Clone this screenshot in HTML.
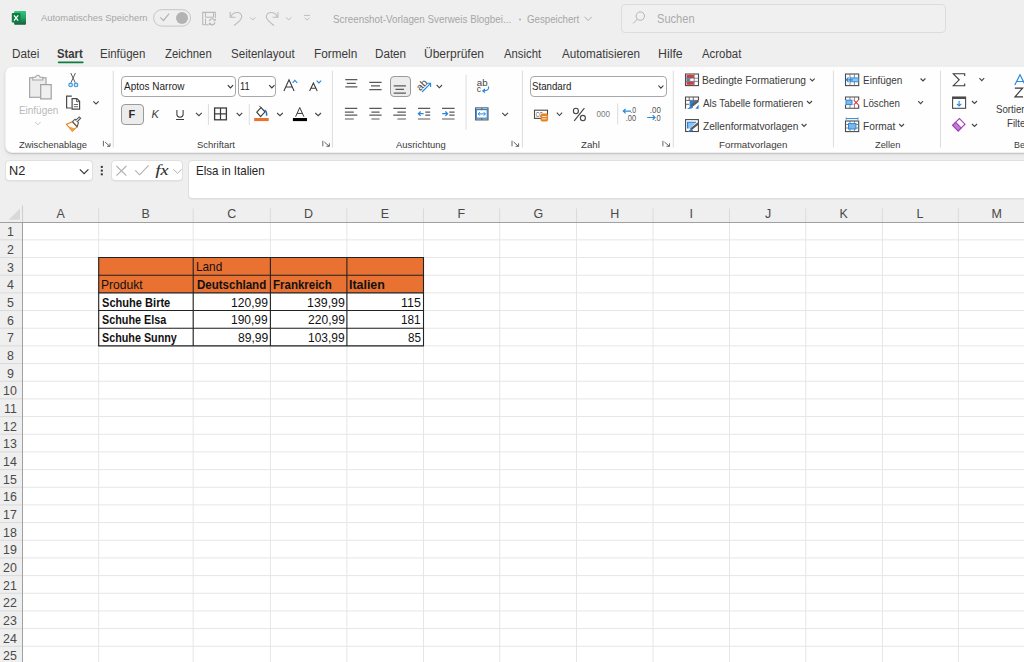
<!DOCTYPE html>
<html><head><meta charset="utf-8">
<style>
*{margin:0;padding:0;box-sizing:border-box}
html,body{width:1024px;height:662px;overflow:hidden;background:#efefef;font-family:"Liberation Sans",sans-serif;position:relative}
.a{position:absolute}
.t{position:absolute;white-space:nowrap;transform-origin:0 0}
.ov{position:absolute;left:0;top:0;overflow:visible}
</style></head><body>
<svg class="ov" width="1024" height="662" viewBox="0 0 1024 662"><rect x="0" y="199" width="1024" height="23.2" fill="#efefef"/><rect x="0" y="222.2" width="22.5" height="450" fill="#efefef"/><rect x="22.5" y="222.2" width="1002" height="450" fill="#ffffff"/><line x1="98.7" y1="222.2" x2="98.7" y2="662" stroke="#e6e6e6" stroke-width="1"/><line x1="98.7" y1="208.5" x2="98.7" y2="222.2" stroke="#dadada" stroke-width="1"/><line x1="193.2" y1="222.2" x2="193.2" y2="662" stroke="#e6e6e6" stroke-width="1"/><line x1="193.2" y1="208.5" x2="193.2" y2="222.2" stroke="#dadada" stroke-width="1"/><line x1="270.4" y1="222.2" x2="270.4" y2="662" stroke="#e6e6e6" stroke-width="1"/><line x1="270.4" y1="208.5" x2="270.4" y2="222.2" stroke="#dadada" stroke-width="1"/><line x1="346.9" y1="222.2" x2="346.9" y2="662" stroke="#e6e6e6" stroke-width="1"/><line x1="346.9" y1="208.5" x2="346.9" y2="222.2" stroke="#dadada" stroke-width="1"/><line x1="423.5" y1="222.2" x2="423.5" y2="662" stroke="#e6e6e6" stroke-width="1"/><line x1="423.5" y1="208.5" x2="423.5" y2="222.2" stroke="#dadada" stroke-width="1"/><line x1="499.75" y1="222.2" x2="499.75" y2="662" stroke="#e6e6e6" stroke-width="1"/><line x1="499.75" y1="208.5" x2="499.75" y2="222.2" stroke="#dadada" stroke-width="1"/><line x1="576.5" y1="222.2" x2="576.5" y2="662" stroke="#e6e6e6" stroke-width="1"/><line x1="576.5" y1="208.5" x2="576.5" y2="222.2" stroke="#dadada" stroke-width="1"/><line x1="653" y1="222.2" x2="653" y2="662" stroke="#e6e6e6" stroke-width="1"/><line x1="653" y1="208.5" x2="653" y2="222.2" stroke="#dadada" stroke-width="1"/><line x1="729.5" y1="222.2" x2="729.5" y2="662" stroke="#e6e6e6" stroke-width="1"/><line x1="729.5" y1="208.5" x2="729.5" y2="222.2" stroke="#dadada" stroke-width="1"/><line x1="805.75" y1="222.2" x2="805.75" y2="662" stroke="#e6e6e6" stroke-width="1"/><line x1="805.75" y1="208.5" x2="805.75" y2="222.2" stroke="#dadada" stroke-width="1"/><line x1="882.4" y1="222.2" x2="882.4" y2="662" stroke="#e6e6e6" stroke-width="1"/><line x1="882.4" y1="208.5" x2="882.4" y2="222.2" stroke="#dadada" stroke-width="1"/><line x1="958.4" y1="222.2" x2="958.4" y2="662" stroke="#e6e6e6" stroke-width="1"/><line x1="958.4" y1="208.5" x2="958.4" y2="222.2" stroke="#dadada" stroke-width="1"/><line x1="1035" y1="222.2" x2="1035" y2="662" stroke="#e6e6e6" stroke-width="1"/><line x1="1035" y1="208.5" x2="1035" y2="222.2" stroke="#dadada" stroke-width="1"/><line x1="22.5" y1="239.87" x2="1024" y2="239.87" stroke="#e6e6e6" stroke-width="1"/><line x1="0" y1="239.87" x2="22.5" y2="239.87" stroke="#dadada" stroke-width="1"/><line x1="22.5" y1="257.54" x2="1024" y2="257.54" stroke="#e6e6e6" stroke-width="1"/><line x1="0" y1="257.54" x2="22.5" y2="257.54" stroke="#dadada" stroke-width="1"/><line x1="22.5" y1="275.21" x2="1024" y2="275.21" stroke="#e6e6e6" stroke-width="1"/><line x1="0" y1="275.21" x2="22.5" y2="275.21" stroke="#dadada" stroke-width="1"/><line x1="22.5" y1="292.88" x2="1024" y2="292.88" stroke="#e6e6e6" stroke-width="1"/><line x1="0" y1="292.88" x2="22.5" y2="292.88" stroke="#dadada" stroke-width="1"/><line x1="22.5" y1="310.55" x2="1024" y2="310.55" stroke="#e6e6e6" stroke-width="1"/><line x1="0" y1="310.55" x2="22.5" y2="310.55" stroke="#dadada" stroke-width="1"/><line x1="22.5" y1="328.22" x2="1024" y2="328.22" stroke="#e6e6e6" stroke-width="1"/><line x1="0" y1="328.22" x2="22.5" y2="328.22" stroke="#dadada" stroke-width="1"/><line x1="22.5" y1="345.89" x2="1024" y2="345.89" stroke="#e6e6e6" stroke-width="1"/><line x1="0" y1="345.89" x2="22.5" y2="345.89" stroke="#dadada" stroke-width="1"/><line x1="22.5" y1="363.56" x2="1024" y2="363.56" stroke="#e6e6e6" stroke-width="1"/><line x1="0" y1="363.56" x2="22.5" y2="363.56" stroke="#dadada" stroke-width="1"/><line x1="22.5" y1="381.23" x2="1024" y2="381.23" stroke="#e6e6e6" stroke-width="1"/><line x1="0" y1="381.23" x2="22.5" y2="381.23" stroke="#dadada" stroke-width="1"/><line x1="22.5" y1="398.9" x2="1024" y2="398.9" stroke="#e6e6e6" stroke-width="1"/><line x1="0" y1="398.9" x2="22.5" y2="398.9" stroke="#dadada" stroke-width="1"/><line x1="22.5" y1="416.57" x2="1024" y2="416.57" stroke="#e6e6e6" stroke-width="1"/><line x1="0" y1="416.57" x2="22.5" y2="416.57" stroke="#dadada" stroke-width="1"/><line x1="22.5" y1="434.24" x2="1024" y2="434.24" stroke="#e6e6e6" stroke-width="1"/><line x1="0" y1="434.24" x2="22.5" y2="434.24" stroke="#dadada" stroke-width="1"/><line x1="22.5" y1="451.91" x2="1024" y2="451.91" stroke="#e6e6e6" stroke-width="1"/><line x1="0" y1="451.91" x2="22.5" y2="451.91" stroke="#dadada" stroke-width="1"/><line x1="22.5" y1="469.58" x2="1024" y2="469.58" stroke="#e6e6e6" stroke-width="1"/><line x1="0" y1="469.58" x2="22.5" y2="469.58" stroke="#dadada" stroke-width="1"/><line x1="22.5" y1="487.25" x2="1024" y2="487.25" stroke="#e6e6e6" stroke-width="1"/><line x1="0" y1="487.25" x2="22.5" y2="487.25" stroke="#dadada" stroke-width="1"/><line x1="22.5" y1="504.92" x2="1024" y2="504.92" stroke="#e6e6e6" stroke-width="1"/><line x1="0" y1="504.92" x2="22.5" y2="504.92" stroke="#dadada" stroke-width="1"/><line x1="22.5" y1="522.59" x2="1024" y2="522.59" stroke="#e6e6e6" stroke-width="1"/><line x1="0" y1="522.59" x2="22.5" y2="522.59" stroke="#dadada" stroke-width="1"/><line x1="22.5" y1="540.26" x2="1024" y2="540.26" stroke="#e6e6e6" stroke-width="1"/><line x1="0" y1="540.26" x2="22.5" y2="540.26" stroke="#dadada" stroke-width="1"/><line x1="22.5" y1="557.93" x2="1024" y2="557.93" stroke="#e6e6e6" stroke-width="1"/><line x1="0" y1="557.93" x2="22.5" y2="557.93" stroke="#dadada" stroke-width="1"/><line x1="22.5" y1="575.6" x2="1024" y2="575.6" stroke="#e6e6e6" stroke-width="1"/><line x1="0" y1="575.6" x2="22.5" y2="575.6" stroke="#dadada" stroke-width="1"/><line x1="22.5" y1="593.27" x2="1024" y2="593.27" stroke="#e6e6e6" stroke-width="1"/><line x1="0" y1="593.27" x2="22.5" y2="593.27" stroke="#dadada" stroke-width="1"/><line x1="22.5" y1="610.94" x2="1024" y2="610.94" stroke="#e6e6e6" stroke-width="1"/><line x1="0" y1="610.94" x2="22.5" y2="610.94" stroke="#dadada" stroke-width="1"/><line x1="22.5" y1="628.61" x2="1024" y2="628.61" stroke="#e6e6e6" stroke-width="1"/><line x1="0" y1="628.61" x2="22.5" y2="628.61" stroke="#dadada" stroke-width="1"/><line x1="22.5" y1="646.28" x2="1024" y2="646.28" stroke="#e6e6e6" stroke-width="1"/><line x1="0" y1="646.28" x2="22.5" y2="646.28" stroke="#dadada" stroke-width="1"/><line x1="22.5" y1="663.95" x2="1024" y2="663.95" stroke="#e6e6e6" stroke-width="1"/><line x1="0" y1="663.95" x2="22.5" y2="663.95" stroke="#dadada" stroke-width="1"/><line x1="0" y1="222.5" x2="1024" y2="222.5" stroke="#a0a0a0" stroke-width="1"/><line x1="22.5" y1="205.4" x2="22.5" y2="222.2" stroke="#cfcfcf" stroke-width="1.1"/><line x1="22.5" y1="222.2" x2="22.5" y2="662" stroke="#a0a0a0" stroke-width="1"/><polygon points="20,208.6 20,219.7 8.6,219.7" fill="#d9d9d9"/><rect x="98.7" y="257.54" width="324.80" height="35.34" fill="#e97132"/><line x1="98.7" y1="257.54" x2="98.7" y2="345.89" stroke="#222" stroke-width="1.1"/><line x1="193.2" y1="257.54" x2="193.2" y2="345.89" stroke="#222" stroke-width="1.1"/><line x1="270.4" y1="257.54" x2="270.4" y2="345.89" stroke="#222" stroke-width="1.1"/><line x1="346.9" y1="257.54" x2="346.9" y2="345.89" stroke="#222" stroke-width="1.1"/><line x1="423.5" y1="257.54" x2="423.5" y2="345.89" stroke="#222" stroke-width="1.1"/><line x1="98.2" y1="257.54" x2="424.0" y2="257.54" stroke="#222" stroke-width="1.1"/><line x1="98.2" y1="275.21" x2="424.0" y2="275.21" stroke="#222" stroke-width="1.1"/><line x1="98.2" y1="292.88" x2="424.0" y2="292.88" stroke="#222" stroke-width="1.1"/><line x1="98.2" y1="310.55" x2="424.0" y2="310.55" stroke="#222" stroke-width="1.1"/><line x1="98.2" y1="328.22" x2="424.0" y2="328.22" stroke="#222" stroke-width="1.1"/><line x1="98.2" y1="345.89" x2="424.0" y2="345.89" stroke="#222" stroke-width="1.1"/></svg>
<div class="a" style="left:620.7px;top:3.7px;width:324.9px;height:29.4px;background:#f0f0f0;border:1.2px solid #dcdcdc;border-radius:4px"></div>
<div class="a" style="left:5.3px;top:66px;width:1040px;height:86.8px;background:#fefefe;border:1px solid rgba(0,0,0,.055);border-radius:7px;box-shadow:0 1px 1.5px rgba(0,0,0,.18),0 3px 6px rgba(0,0,0,.04)"></div>
<div class="a" style="left:121.4px;top:76px;width:114.3px;height:20.85px;background:#fff;border:1px solid #a8a8a8;border-radius:4px"></div>
<div class="a" style="left:237.9px;top:76px;width:38.6px;height:20.85px;background:#fff;border:1px solid #a8a8a8;border-radius:4px"></div>
<div class="a" style="left:530.1px;top:76.2px;width:136.7px;height:20.9px;background:#fff;border:1px solid #a8a8a8;border-radius:4px"></div>
<div class="a" style="left:121.2px;top:103.7px;width:22.9px;height:21.2px;background:#ececec;border:1px solid #9a9a9a;border-radius:4px"></div>
<div class="a" style="left:389.6px;top:76.2px;width:21.8px;height:20.5px;background:#ececec;border:1px solid #9a9a9a;border-radius:4px"></div>
<div class="a" style="left:4.9px;top:159.9px;width:87.9px;height:21.5px;background:#fff;border:1px solid #e0e0e0;border-radius:4px;box-shadow:0 0.5px 0.5px rgba(0,0,0,.08)"></div>
<div class="a" style="left:110.8px;top:160.1px;width:72.3px;height:21.3px;background:#fff;border:1px solid #e0e0e0;border-radius:4px;box-shadow:0 0.5px 0.5px rgba(0,0,0,.08)"></div>
<div class="a" style="left:187.5px;top:159.9px;width:900px;height:39.2px;background:#fff;border:1px solid #e0e0e0;border-radius:4px;box-shadow:0 0.5px 0.5px rgba(0,0,0,.08)"></div>
<svg class="ov" width="1024" height="662" viewBox="0 0 1024 662">
<defs>
<linearGradient id="xg" x1="0" y1="0" x2="0" y2="1"><stop offset="0" stop-color="#33c481"/><stop offset="0.5" stop-color="#21a366"/><stop offset="1" stop-color="#185c37"/></linearGradient>
</defs>
<!-- excel logo -->
<rect x="14.1" y="10.9" width="11.9" height="13.9" rx="1" fill="url(#xg)"/>
<rect x="11.8" y="13.1" width="8.7" height="9.5" rx="0.8" fill="#107c41"/>
<path d="M14 15.3 L18.2 20.6 M18.2 15.3 L14 20.6" stroke="#fff" stroke-width="1.3"/>
<!-- toggle -->
<rect x="153.6" y="9.7" width="37" height="16.4" rx="8.2" fill="none" stroke="#c6c6c6" stroke-width="1"/>
<path d="M160.3 17.3 L163.5 20.5 L169.1 13.7" fill="none" stroke="#b4b4b4" stroke-width="1.2"/>
<circle cx="182" cy="18" r="6" fill="#b3b3b3"/>
<!-- save -->
<path d="M208.4 24.7 H203.4 Q202.7 24.7 202.7 24 V12.4 H215.3 V17.8" fill="none" stroke="#b9b9b9" stroke-width="1.1"/>
<path d="M205.5 24.5 V18.6 M205.5 12.4 V17.2 H213.5 V12.4" fill="none" stroke="#b9b9b9" stroke-width="1"/>
<path d="M209.3 21.2 A3 3 0 0 1 214.9 20.3 M215 22.4 A3 3 0 0 1 209.4 23.3" fill="none" stroke="#b4b4b4" stroke-width="1.1"/>
<path d="M215.3 18.7 V20.6 H213.4 M209.2 25.2 V23.3 H211.1" fill="none" stroke="#b4b4b4" stroke-width="0.9"/>
<!-- undo redo -->
<path d="M230.2 12 V17.3 H235.5" fill="none" stroke="#bcbcbc" stroke-width="1.1"/>
<path d="M230.8 17 C233 11.2 241.8 10.8 241.8 17 C241.8 19.6 238 22.5 234 25.6" fill="none" stroke="#bcbcbc" stroke-width="1.1"/>
<path d="M250 17.3 L252.7 20 L255.4 17.3" fill="none" stroke="#bcbcbc" stroke-width="1"/>
<path d="M277.9 12 V17.3 H272.6" fill="none" stroke="#bcbcbc" stroke-width="1.1"/>
<path d="M277.3 17 C275.1 11.2 266.3 10.8 266.3 17 C266.3 19.6 270.1 22.5 274.1 25.6" fill="none" stroke="#bcbcbc" stroke-width="1.1"/>
<path d="M286 17.3 L288.7 20 L291.4 17.3" fill="none" stroke="#bcbcbc" stroke-width="1"/>
<path d="M304.1 15.4 H310 M304.6 17.7 L307.05 20.2 L309.5 17.7" fill="none" stroke="#bcbcbc" stroke-width="1"/>
<!-- title chevron + bullet -->
<circle cx="520" cy="19.5" r="1" fill="#b0b0b0"/>
<path d="M584.5 16.8 L588.15 20.5 L591.8 16.8" fill="none" stroke="#b0b0b0" stroke-width="1"/>
<!-- search icon -->
<circle cx="640.3" cy="16.1" r="4.2" fill="none" stroke="#b4b4b4" stroke-width="1"/>
<path d="M637.3 19.1 L633.3 23.4" stroke="#b4b4b4" stroke-width="1"/>
<!-- tab underline -->
<rect x="57.8" y="61.4" width="25.8" height="1.8" rx="0.9" fill="#0f7b3e"/>
<!-- separators -->
<g stroke="#dcdcdc" stroke-width="1">
<line x1="113.2" y1="70.7" x2="113.2" y2="147.5"/>
<line x1="332.4" y1="70.7" x2="332.4" y2="147.5"/>
<line x1="522.4" y1="70.7" x2="522.4" y2="147.5"/>
<line x1="673.3" y1="70.7" x2="673.3" y2="147.5"/>
<line x1="833.4" y1="70.7" x2="833.4" y2="147.5"/>
<line x1="940.5" y1="70.7" x2="940.5" y2="147.5"/>
<line x1="208.4" y1="104" x2="208.4" y2="125"/>
<line x1="249.3" y1="104" x2="249.3" y2="125"/>
<line x1="466.1" y1="74.8" x2="466.1" y2="129.5"/>
<line x1="617.7" y1="103.5" x2="617.7" y2="124.6"/>
</g>
<!-- ===== CLIPBOARD ===== -->
<rect x="29.6" y="77.8" width="16.4" height="19.5" fill="#ececec" stroke="#a6a6a6" stroke-width="1.2"/>
<path d="M32.8 80 V77.3 H35.6 C35.8 74.5 39.8 74.5 40 77.3 H42.8 V80 Z" fill="#f3f3f3" stroke="#a6a6a6" stroke-width="1.1"/>
<rect x="40.7" y="84.6" width="10.5" height="14.3" fill="#f0f0f0" stroke="#a0a0a0" stroke-width="1.2"/>
<path d="M35.2 122 L37.9 124.8 L40.6 122" fill="none" stroke="#c0c0c0" stroke-width="0.9"/>
<!-- scissors -->
<path d="M70.8 73 L75.2 82.6 M75.4 73 L71 82.6" stroke="#4a4a4a" stroke-width="0.9"/>
<circle cx="70.6" cy="84.9" r="1.8" fill="#cfe6f8" stroke="#3a96dd" stroke-width="1.1"/>
<circle cx="76" cy="84.9" r="1.8" fill="#cfe6f8" stroke="#3a96dd" stroke-width="1.1"/>
<!-- copy -->
<path d="M71.6 108 H66.6 V96.2 H71.8" fill="none" stroke="#4a4a4a" stroke-width="1.2"/>
<path d="M72.1 98.7 H77 L79.6 101.3 V109.2 H72.1 Z" fill="#fff" stroke="#4a4a4a" stroke-width="1.2"/>
<path d="M76.6 98.7 V101.7 H79.6" fill="none" stroke="#4a4a4a" stroke-width="0.9"/>
<path d="M73.8 104.5 H78 M73.8 106.7 H78" stroke="#4a4a4a" stroke-width="0.8"/>
<path d="M93.3 101.3 L96 104 L98.7 101.3" fill="none" stroke="#444" stroke-width="1.1"/>
<!-- format painter -->
<path d="M66.4 124.3 L72.2 121.9 L77 126.8 L72.4 131.2 Z" fill="#fff" stroke="#e8821e" stroke-width="1.1"/>
<path d="M68.8 126.5 L75.3 128.4 L72.4 131.2 Z" fill="#f0a040"/>
<path d="M72.5 121.6 L75 119.2 L78.4 122.6 L77.2 126.6 Z" fill="#fff" stroke="#555" stroke-width="1.1"/>
<path d="M75.6 120.3 L79.3 116.9 L80.6 118.2 L77.2 121.9" fill="#fff" stroke="#555" stroke-width="1.1"/>
<!-- launchers -->
<g fill="none" stroke="#555" stroke-width="0.9">
<path d="M103.4 140.8 V146.3 M105 142 L109.8 146.3 M107 146.3 H110 V143.3"/>
<path d="M322.8 140.8 V146.3 M324.4 142 L329.2 146.3 M326.4 146.3 H329.4 V143.3"/>
<path d="M512 140.8 V146.3 M513.6 142 L518.4 146.3 M515.6 146.3 H518.6 V143.3"/>
<path d="M662.9 140.8 V146.3 M664.5 142 L669.3 146.3 M666.5 146.3 H669.5 V143.3"/>
</g>
<!-- ===== FONT ===== -->
<path d="M227.8 85.2 L230.45 87.9 L233.1 85.2" fill="none" stroke="#333" stroke-width="1.1"/>
<path d="M269.2 85.2 L271.85 87.9 L274.5 85.2" fill="none" stroke="#333" stroke-width="1.1"/>
<path d="M658.4 85.5 L660.9 88.2 L663.4 85.5" fill="none" stroke="#333" stroke-width="1.1"/>
<!-- grow/shrink A -->
<path d="M283.9 91 L289 79.8 L294.1 91 M285.8 87 H292.2" fill="none" stroke="#3a3a3a" stroke-width="1.1"/>
<path d="M292.6 82.8 L294.9 80.4 L297.2 82.8" fill="none" stroke="#2b88d8" stroke-width="1.1"/>
<path d="M309.6 91 L313.4 83 L317.2 91 M311 88.2 H315.8" fill="none" stroke="#3a3a3a" stroke-width="1.1"/>
<path d="M316.6 80.6 L318.9 83 L321.2 80.6" fill="none" stroke="#2b88d8" stroke-width="1.1"/>
<!-- B I U -->
<text x="128.6" y="117.6" font-family="Liberation Sans" font-weight="bold" font-size="11" fill="#2a2a2a">F</text>
<text x="151.6" y="117.6" font-family="Liberation Sans" font-style="italic" font-size="11" fill="#3a3a3a">K</text>
<path d="M176.9 109.9 V114.6 C176.9 118 183.1 118 183.1 114.6 V109.9 M176.1 119.5 H184" fill="none" stroke="#3a3a3a" stroke-width="1.05"/>
<path d="M196 112.8 L198.9 115.7 L201.8 112.8" fill="none" stroke="#444" stroke-width="1.1"/>
<!-- borders -->
<rect x="214.6" y="108" width="11.8" height="11.8" fill="none" stroke="#3c3c3c" stroke-width="1.3"/>
<path d="M220.5 108 V119.8 M214.6 113.9 H226.4" stroke="#3c3c3c" stroke-width="1.2"/>
<path d="M236.7 112.8 L239.45 115.7 L242.2 112.8" fill="none" stroke="#444" stroke-width="1.1"/>
<!-- fill color -->
<path d="M256.8 112.2 L261 107.6 L265 111.8 L260.6 116.6 Z" fill="#fff" stroke="#3c3c3c" stroke-width="1.1"/>
<path d="M261 107.6 L259.3 105.8" stroke="#3c3c3c" stroke-width="1"/>
<path d="M264.6 110.2 C266.6 111 266.8 113 266.6 115.8" fill="none" stroke="#1f6fc5" stroke-width="1.5"/>
<rect x="254.2" y="118" width="14.5" height="3.1" fill="#e97132"/>
<path d="M277.1 113 L279.95 115.7 L282.8 113" fill="none" stroke="#444" stroke-width="1.1"/>
<!-- font color -->
<path d="M295.6 116.7 L299.75 107.5 L303.9 116.7 M297.2 113.4 H302.3" fill="none" stroke="#3a3a3a" stroke-width="1"/>
<rect x="292.9" y="118" width="14.1" height="3.1" fill="#000"/>
<path d="M315.3 113 L318.15 115.7 L321 113" fill="none" stroke="#444" stroke-width="1.1"/>
<!-- ===== ALIGNMENT ===== -->
<g stroke="#5a5a5a" stroke-width="1.2">
<path d="M345.3 79.6 H357.3 M346.8 83.4 H355.8 M345.3 86.9 H357.3"/>
<path d="M369.3 82.3 H381.6 M371 85.8 H380 M369.3 89.6 H381.6"/>
<path d="M393.7 85.8 H405.9 M395.5 89.4 H404 M393.7 93.1 H405.9"/>
<path d="M344.9 108.4 H357.3 M344.9 112.1 H353.8 M344.9 115.2 H357.3 M344.9 119 H353.8"/>
<path d="M369.3 108.4 H381.6 M371.4 112.1 H379.6 M369.3 115.2 H381.6 M371.4 119 H379.6"/>
<path d="M393.3 108.4 H405.9 M397.4 112.1 H405.9 M393.3 115.2 H405.9 M397.4 119 H405.9"/>
<path d="M418 108.4 H430.2 M425.3 112.1 H430.2 M425.3 115.2 H430.2 M418 119 H430.2"/>
<path d="M442 108.4 H454.6 M449.3 112.1 H454.6 M449.3 115.2 H454.6 M442 119 H454.6"/>
</g>
<path d="M418.4 113.7 H423.6 M420.6 111.5 L418.4 113.7 L420.6 115.9" fill="none" stroke="#2b88d8" stroke-width="1.3"/>
<path d="M442.2 113.7 H447.6 M445.4 111.5 L447.6 113.7 L445.4 115.9" fill="none" stroke="#2b88d8" stroke-width="1.3"/>
<!-- orientation -->
<text x="0" y="0" transform="translate(420.2,91.2) rotate(-45)" font-family="Liberation Sans" font-size="10" fill="#444">ab</text>
<path d="M422 92 L430.6 83.3 M426.8 83.3 H430.6 V87.1" fill="none" stroke="#2b88d8" stroke-width="1.1"/>
<path d="M436.7 85 L439.35 87.8 L442 85" fill="none" stroke="#444" stroke-width="1.1"/>
<!-- wrap -->
<text x="476.8" y="85.8" font-family="Liberation Sans" font-size="8.6" fill="#444" textLength="10.8" lengthAdjust="spacingAndGlyphs">ab</text>
<text x="476.8" y="92.4" font-family="Liberation Sans" font-size="8.6" fill="#444">c</text>
<path d="M488.4 86.5 C489.4 89 487.6 91 483.2 90.9 M485 89 L482.8 90.9 L485 92.6" fill="none" stroke="#2b88d8" stroke-width="1.2"/>
<!-- merge -->
<rect x="475.6" y="107.9" width="12.4" height="12" fill="#fff" stroke="#555" stroke-width="1.1"/>
<rect x="476.3" y="109.6" width="11" height="8.6" fill="#fff" stroke="#2b88d8" stroke-width="1.2"/>
<path d="M481.8 107.9 V109.6 M481.8 118.2 V119.9" stroke="#555" stroke-width="0.9"/>
<path d="M478.2 113.9 H485.4 M479.8 112.2 L478.2 113.9 L479.8 115.6 M483.8 112.2 L485.4 113.9 L483.8 115.6" fill="none" stroke="#2b88d8" stroke-width="1"/>
<path d="M502.2 112.9 L505.1 115.7 L508 112.9" fill="none" stroke="#444" stroke-width="1.1"/>
<!-- ===== NUMBER ===== -->
<rect x="534.5" y="110.2" width="13" height="8.2" fill="#fff" stroke="#4a4a4a" stroke-width="1.1"/>
<text x="535.8" y="117.2" font-family="Liberation Sans" font-size="6.5" fill="#4a4a4a" textLength="7" lengthAdjust="spacingAndGlyphs">CC</text>
<rect x="540.6" y="113.6" width="7.4" height="7.8" rx="1.6" fill="#e8821e"/>
<path d="M542 116.5 H546.6 M542 118.8 H546.6" stroke="#fff" stroke-width="0.8"/>
<path d="M556.8 112.6 L559.45 115.5 L562.1 112.6" fill="none" stroke="#444" stroke-width="1.1"/>
<path d="M574.2 120.8 L584.4 108.2" stroke="#444" stroke-width="1.1"/><ellipse cx="575.9" cy="111" rx="2.5" ry="2.7" fill="none" stroke="#444" stroke-width="1.1"/><ellipse cx="582.9" cy="118.1" rx="2.5" ry="2.7" fill="none" stroke="#444" stroke-width="1.1"/>
<text x="596.6" y="117.2" font-family="Liberation Sans" font-size="9.4" fill="#7a7a7a" textLength="13.5" lengthAdjust="spacingAndGlyphs">000</text>
<text x="630.4" y="113" font-family="Liberation Sans" font-size="8.6" fill="#555" textLength="5.8" lengthAdjust="spacingAndGlyphs">.0</text>
<text x="625.8" y="120.6" font-family="Liberation Sans" font-size="8.6" fill="#555" textLength="10.4" lengthAdjust="spacingAndGlyphs">.00</text>
<path d="M623.3 111.1 H631 M625.6 108.8 L623.3 111.1 L625.6 113.4" fill="none" stroke="#2b88d8" stroke-width="1.2"/>
<text x="649.8" y="113" font-family="Liberation Sans" font-size="8.6" fill="#555" textLength="11" lengthAdjust="spacingAndGlyphs">.00</text>
<text x="654.4" y="120.6" font-family="Liberation Sans" font-size="8.6" fill="#555" textLength="6.3" lengthAdjust="spacingAndGlyphs">.0</text>
<path d="M647.2 117.5 H655 M652.7 115.2 L655 117.5 L652.7 119.8" fill="none" stroke="#2b88d8" stroke-width="1.2"/>
<!-- ===== STYLES ===== -->
<!-- conditional formatting -->
<rect x="685.5" y="74" width="13" height="11.6" fill="#fff" stroke="#4a4a4a" stroke-width="1.1"/>
<rect x="686.5" y="75" width="7.4" height="3" fill="#e5343a"/>
<rect x="686.5" y="81.6" width="7.4" height="3.2" fill="#e5343a"/>
<rect x="686.5" y="78.4" width="3" height="2.8" fill="#2b88d8"/>
<path d="M685.5 78.2 H698.5 M685.5 81.4 H698.5 M689.8 74 V85.6 M694.2 74 V85.6" stroke="#6a6a6a" stroke-width="0.8"/>
<path d="M809.9 78.6 L812.3 81 L814.7 78.6" fill="none" stroke="#444" stroke-width="1.1"/>
<!-- format as table -->
<path d="M685.5 108.7 V97 H698.5 V100.4" fill="none" stroke="#4a4a4a" stroke-width="1.1"/>
<path d="M685.5 100.4 H698.5 M685.5 104.3 H689.2 M689.2 97 V100.4 M693.3 97 V100.4" stroke="#5a5a5a" stroke-width="0.9"/>
<path d="M689.6 100.9 H697 L690.8 106.6 H689.6 Z" fill="#2b7cd3"/>
<path d="M695.4 108.7 L698.6 104.8 V108.7 Z" fill="#2b7cd3"/>
<path d="M691.2 106.4 L698.3 100.9" stroke="#5a5a5a" stroke-width="2.3"/>
<path d="M687 108.9 C689 108.3 690 106.3 691.5 105.8 L693.2 107.3 C692 108.7 689.5 109.3 687 108.9 Z" fill="#2b7cd3"/>
<path d="M807 101 L809.5 103.5 L812 101" fill="none" stroke="#444" stroke-width="1.1"/>
<!-- cell styles -->
<rect x="685.6" y="119.6" width="12.8" height="11.9" fill="#fff" stroke="#4a4a4a" stroke-width="1.1"/>
<path d="M687.6 128.6 V122.3 H696.4 L689.8 128.6 Z" fill="#8cc4f5"/>
<path d="M687.6 128.6 V122.3 H696" fill="none" stroke="#2b7cd3" stroke-width="1.1"/>
<path d="M690.8 129.3 L698.3 123.4" stroke="#5a5a5a" stroke-width="2.3"/>
<path d="M687 131.8 C689 131.1 690 129.2 691.4 128.7 L693.1 130.2 C692 131.6 689.5 132.2 687 131.8 Z" fill="#2b7cd3"/>
<path d="M801.7 124 L804.1 126.4 L806.5 124" fill="none" stroke="#444" stroke-width="1.1"/>
<!-- ===== CELLS ===== -->
<!-- insert -->
<rect x="845.5" y="74" width="13.2" height="11.6" fill="#fff" stroke="#4a4a4a" stroke-width="1.1"/>
<path d="M850 74 V85.6 M854.4 74 V85.6" stroke="#6a6a6a" stroke-width="0.8"/>
<rect x="850.4" y="77.9" width="8" height="3.9" fill="#8cc4f5" stroke="#2b88d8" stroke-width="0.9"/>
<path d="M846.3 79.8 H853 M848.6 77.5 L846.3 79.8 L848.6 82.1" fill="none" stroke="#2b88d8" stroke-width="1.2"/>
<path d="M920.6 78.5 L923 81 L925.4 78.5" fill="none" stroke="#444" stroke-width="1.1"/>
<!-- delete -->
<path d="M845.5 100 V97 H858.7 V100 M845.5 104.8 V108.3 H858.7 V104.8" fill="none" stroke="#4a4a4a" stroke-width="1.1"/>
<path d="M850 97 V100 M854.4 97 V100 M850 104.8 V108.3 M854.4 104.8 V108.3" stroke="#6a6a6a" stroke-width="0.8"/>
<rect x="846" y="100.2" width="6" height="4.4" fill="#7ab8ee" stroke="#2b88d8" stroke-width="1"/>
<path d="M853.8 100.2 L858.4 104.8 M858.4 100.2 L853.8 104.8" stroke="#e5343a" stroke-width="1.1"/>
<path d="M918.2 101.2 L920.6 103.6 L923 101.2" fill="none" stroke="#444" stroke-width="1.1"/>
<!-- format -->
<rect x="845.5" y="121" width="13.2" height="10.6" fill="#fff" stroke="#4a4a4a" stroke-width="1.1"/>
<path d="M850 121 V131.6 M854.4 121 V131.6 M845.5 124.5 H858.7 M845.5 128 H858.7" stroke="#6a6a6a" stroke-width="0.8"/>
<rect x="848.5" y="123.6" width="7.4" height="5.4" fill="#7ab8ee" stroke="#2b88d8" stroke-width="1"/>
<path d="M846.2 118.6 H858" stroke="#2b88d8" stroke-width="1"/>
<path d="M846.2 117.4 V119.8 M858 117.4 V119.8" stroke="#2b88d8" stroke-width="0.8"/>
<path d="M899.2 124 L901.6 126.4 L904 124" fill="none" stroke="#444" stroke-width="1.1"/>
<!-- ===== EDITING ===== -->
<path d="M964.7 76 V73.8 H953.3 L959.2 79.8 L953.3 85.7 H964.7 V83.5" fill="none" stroke="#3a3a3a" stroke-width="1.1"/>
<path d="M979.4 78.2 L981.8 80.7 L984.2 78.2" fill="none" stroke="#444" stroke-width="1.1"/>
<rect x="952.6" y="97" width="13" height="11.3" fill="#fff" stroke="#4a4a4a" stroke-width="1.1"/>
<rect x="952.6" y="97" width="13" height="2" fill="#4a4a4a"/>
<path d="M959.1 100.8 V106 M956.9 103.8 L959.1 106 L961.3 103.8" fill="none" stroke="#2b88d8" stroke-width="1.1"/>
<path d="M972 101 L974.5 103.5 L977 101" fill="none" stroke="#444" stroke-width="1.1"/>
<path d="M952.6 125.3 L959.4 118.6 L965 124.2 L958.2 131 Z" fill="#fff" stroke="#a33fb8" stroke-width="1.1"/>
<path d="M952.6 125.3 L955.6 122.3 L961.2 127.9 L958.2 131 Z" fill="#c27dd4" stroke="#a33fb8" stroke-width="1.1"/>
<path d="M972 124 L974.5 126.5 L977 124" fill="none" stroke="#444" stroke-width="1.1"/>
<!-- sort A Z -->
<path d="M1014.8 85 L1020 74.8 L1025.2 85 M1016.6 81.5 H1023.4" fill="none" stroke="#2b88d8" stroke-width="1.2"/>
<path d="M1014.8 88.2 H1022.6 L1015 96.8 H1023" fill="none" stroke="#3a3a3a" stroke-width="1.2"/>
<!-- ===== FORMULA BAR ===== -->
<path d="M79.8 169.4 L84.1 173.7 L88.4 169.4" fill="none" stroke="#333" stroke-width="1.1"/>
<rect x="100.8" y="165.9" width="2" height="2" fill="#333"/>
<rect x="100.8" y="169.6" width="2" height="2" fill="#333"/>
<rect x="100.8" y="173.3" width="2" height="2" fill="#333"/>
<path d="M116.4 166 L126.4 175.6 M126.4 166 L116.4 175.6" stroke="#b0b0b0" stroke-width="1.1"/>
<path d="M135.2 170.3 L139.6 174.8 L148.6 165.4" fill="none" stroke="#b0b0b0" stroke-width="1.1"/>
<text x="155.4" y="175.4" font-family="Liberation Serif" font-style="italic" font-size="14" fill="#2a2a2a" stroke="#2a2a2a" stroke-width="0.1" textLength="13" lengthAdjust="spacingAndGlyphs">fx</text>
<path d="M173.3 169.2 L177.5 173.3 L181.7 169.2" fill="none" stroke="#b0b0b0" stroke-width="1"/>
</svg>

<div class="t" style="left:40.70px;top:13.05px;font-size:9.71px;line-height:9.71px;color:#a6a6a6;transform:scaleX(0.968)">Automatisches Speichern</div>
<div class="t" style="left:333.31px;top:14.01px;font-size:11.16px;line-height:11.16px;color:#a6a6a6;transform:scaleX(0.881)">Screenshot-Vorlagen Sverweis Blogbei...</div>
<div class="t" style="left:526.62px;top:13.91px;font-size:11.16px;line-height:11.16px;color:#a6a6a6;transform:scaleX(0.869)">Gespeichert</div>
<div class="t" style="left:656.96px;top:13.01px;font-size:12.17px;line-height:12.17px;color:#ababab;transform:scaleX(0.912)">Suchen</div>
<div class="t" style="left:12.06px;top:47.50px;font-size:12.68px;line-height:12.68px;color:#3b3b3b;transform:scaleX(0.926)">Datei</div>
<div class="t" style="left:57.27px;top:47.50px;font-size:12.50px;line-height:12.50px;color:#3b3b3b;font-weight:bold;transform:scaleX(0.905)">Start</div>
<div class="t" style="left:100.33px;top:47.50px;font-size:12.68px;line-height:12.68px;color:#3b3b3b;transform:scaleX(0.905)">Einfügen</div>
<div class="t" style="left:164.66px;top:47.50px;font-size:12.68px;line-height:12.68px;color:#3b3b3b;transform:scaleX(0.896)">Zeichnen</div>
<div class="t" style="left:230.79px;top:47.50px;font-size:12.68px;line-height:12.68px;color:#3b3b3b;transform:scaleX(0.912)">Seitenlayout</div>
<div class="t" style="left:313.55px;top:47.50px;font-size:12.68px;line-height:12.68px;color:#3b3b3b;transform:scaleX(0.932)">Formeln</div>
<div class="t" style="left:374.57px;top:47.50px;font-size:12.68px;line-height:12.68px;color:#3b3b3b;transform:scaleX(0.919)">Daten</div>
<div class="t" style="left:423.66px;top:47.50px;font-size:12.68px;line-height:12.68px;color:#3b3b3b;transform:scaleX(0.946)">Überprüfen</div>
<div class="t" style="left:503.60px;top:47.50px;font-size:12.68px;line-height:12.68px;color:#3b3b3b;transform:scaleX(0.892)">Ansicht</div>
<div class="t" style="left:561.80px;top:47.50px;font-size:12.68px;line-height:12.68px;color:#3b3b3b;transform:scaleX(0.922)">Automatisieren</div>
<div class="t" style="left:658.41px;top:47.50px;font-size:12.68px;line-height:12.68px;color:#3b3b3b;transform:scaleX(0.975)">Hilfe</div>
<div class="t" style="left:702.40px;top:47.50px;font-size:12.68px;line-height:12.68px;color:#3b3b3b;transform:scaleX(0.900)">Acrobat</div>
<div class="t" style="left:18.90px;top:105.80px;font-size:10.00px;line-height:10.00px;color:#b9b9b9;transform:scaleX(1.000)">Einfügen</div>
<div class="t" style="left:19.42px;top:139.71px;font-size:9.86px;line-height:9.86px;color:#3b3b3b;transform:scaleX(0.955)">Zwischenablage</div>
<div class="t" style="left:197.22px;top:139.71px;font-size:9.86px;line-height:9.86px;color:#3b3b3b;transform:scaleX(0.965)">Schriftart</div>
<div class="t" style="left:396.00px;top:139.71px;font-size:9.86px;line-height:9.86px;color:#3b3b3b;transform:scaleX(0.956)">Ausrichtung</div>
<div class="t" style="left:581.41px;top:139.71px;font-size:9.86px;line-height:9.86px;color:#3b3b3b;transform:scaleX(0.986)">Zahl</div>
<div class="t" style="left:718.92px;top:139.71px;font-size:9.86px;line-height:9.86px;color:#3b3b3b;transform:scaleX(0.993)">Formatvorlagen</div>
<div class="t" style="left:874.62px;top:139.71px;font-size:9.86px;line-height:9.86px;color:#3b3b3b;transform:scaleX(0.946)">Zellen</div>
<div class="t" style="left:1013.79px;top:139.71px;font-size:9.86px;line-height:9.86px;color:#3b3b3b;transform:scaleX(0.900)">Bearbeiten</div>
<div class="t" style="left:123.60px;top:81.41px;font-size:11.45px;line-height:11.45px;color:#242424;transform:scaleX(0.873)">Aptos Narrow</div>
<div class="t" style="left:240.05px;top:81.41px;font-size:11.45px;line-height:11.45px;color:#242424;transform:scaleX(0.815)">11</div>
<div class="t" style="left:532.21px;top:81.01px;font-size:11.01px;line-height:11.01px;color:#242424;transform:scaleX(0.882)">Standard</div>
<div class="t" style="left:702.18px;top:75.91px;font-size:10.29px;line-height:10.29px;color:#3b3b3b;transform:scaleX(0.995)">Bedingte Formatierung</div>
<div class="t" style="left:703.00px;top:98.61px;font-size:10.43px;line-height:10.43px;color:#3b3b3b;transform:scaleX(0.947)">Als Tabelle formatieren</div>
<div class="t" style="left:702.70px;top:121.51px;font-size:10.43px;line-height:10.43px;color:#3b3b3b;transform:scaleX(0.974)">Zellenformatvorlagen</div>
<div class="t" style="left:862.70px;top:76.01px;font-size:10.43px;line-height:10.43px;color:#3b3b3b;transform:scaleX(0.958)">Einfügen</div>
<div class="t" style="left:862.72px;top:99.01px;font-size:10.43px;line-height:10.43px;color:#3b3b3b;transform:scaleX(0.936)">Löschen</div>
<div class="t" style="left:862.68px;top:122.01px;font-size:10.43px;line-height:10.43px;color:#3b3b3b;transform:scaleX(0.977)">Format</div>
<div class="t" style="left:996.41px;top:104.91px;font-size:10.43px;line-height:10.43px;color:#3b3b3b;transform:scaleX(0.930)">Sortieren und</div>
<div class="t" style="left:1007.42px;top:118.51px;font-size:10.43px;line-height:10.43px;color:#3b3b3b;transform:scaleX(0.930)">Filtern</div>
<div class="t" style="left:9.23px;top:165.00px;font-size:12.75px;line-height:12.75px;color:#242424;transform:scaleX(0.997)">N2</div>
<div class="t" style="left:196.27px;top:165.01px;font-size:12.17px;line-height:12.17px;color:#242424;transform:scaleX(0.950)">Elsa in Italien</div>
<div class="t" style="left:56.42px;top:207.86px;font-size:12.46px;line-height:12.46px;color:#4a4a4a;transform:scaleX(1.000)">A</div>
<div class="t" style="left:141.59px;top:207.86px;font-size:12.46px;line-height:12.46px;color:#4a4a4a;transform:scaleX(1.000)">B</div>
<div class="t" style="left:227.19px;top:207.86px;font-size:12.46px;line-height:12.46px;color:#4a4a4a;transform:scaleX(1.000)">C</div>
<div class="t" style="left:303.91px;top:207.86px;font-size:12.46px;line-height:12.46px;color:#4a4a4a;transform:scaleX(1.000)">D</div>
<div class="t" style="left:380.78px;top:207.86px;font-size:12.46px;line-height:12.46px;color:#4a4a4a;transform:scaleX(1.000)">E</div>
<div class="t" style="left:457.51px;top:207.86px;font-size:12.46px;line-height:12.46px;color:#4a4a4a;transform:scaleX(1.000)">F</div>
<div class="t" style="left:533.39px;top:207.86px;font-size:12.46px;line-height:12.46px;color:#4a4a4a;transform:scaleX(1.000)">G</div>
<div class="t" style="left:610.20px;top:207.86px;font-size:12.46px;line-height:12.46px;color:#4a4a4a;transform:scaleX(1.000)">H</div>
<div class="t" style="left:689.51px;top:207.86px;font-size:12.46px;line-height:12.46px;color:#4a4a4a;transform:scaleX(1.000)">I</div>
<div class="t" style="left:764.88px;top:207.86px;font-size:12.46px;line-height:12.46px;color:#4a4a4a;transform:scaleX(1.000)">J</div>
<div class="t" style="left:839.46px;top:207.86px;font-size:12.46px;line-height:12.46px;color:#4a4a4a;transform:scaleX(1.000)">K</div>
<div class="t" style="left:916.60px;top:207.86px;font-size:12.46px;line-height:12.46px;color:#4a4a4a;transform:scaleX(1.000)">L</div>
<div class="t" style="left:991.47px;top:207.86px;font-size:12.46px;line-height:12.46px;color:#4a4a4a;transform:scaleX(1.000)">M</div>
<div class="t" style="left:6.70px;top:226.21px;font-size:12.17px;line-height:12.17px;color:#4a4a4a;transform:scaleX(1.020)">1</div>
<div class="t" style="left:6.82px;top:243.88px;font-size:12.17px;line-height:12.17px;color:#4a4a4a;transform:scaleX(1.020)">2</div>
<div class="t" style="left:6.89px;top:261.54px;font-size:12.17px;line-height:12.17px;color:#4a4a4a;transform:scaleX(1.020)">3</div>
<div class="t" style="left:6.89px;top:279.21px;font-size:12.17px;line-height:12.17px;color:#4a4a4a;transform:scaleX(1.020)">4</div>
<div class="t" style="left:6.82px;top:296.90px;font-size:12.17px;line-height:12.17px;color:#4a4a4a;transform:scaleX(1.020)">5</div>
<div class="t" style="left:6.76px;top:314.56px;font-size:12.17px;line-height:12.17px;color:#4a4a4a;transform:scaleX(1.020)">6</div>
<div class="t" style="left:6.82px;top:332.23px;font-size:12.17px;line-height:12.17px;color:#4a4a4a;transform:scaleX(1.020)">7</div>
<div class="t" style="left:6.82px;top:349.90px;font-size:12.17px;line-height:12.17px;color:#4a4a4a;transform:scaleX(1.020)">8</div>
<div class="t" style="left:6.89px;top:367.57px;font-size:12.17px;line-height:12.17px;color:#4a4a4a;transform:scaleX(1.020)">9</div>
<div class="t" style="left:3.18px;top:385.24px;font-size:12.17px;line-height:12.17px;color:#4a4a4a;transform:scaleX(1.020)">10</div>
<div class="t" style="left:3.71px;top:402.91px;font-size:12.17px;line-height:12.17px;color:#4a4a4a;transform:scaleX(1.020)">11</div>
<div class="t" style="left:3.25px;top:420.57px;font-size:12.17px;line-height:12.17px;color:#4a4a4a;transform:scaleX(1.020)">12</div>
<div class="t" style="left:3.18px;top:438.26px;font-size:12.17px;line-height:12.17px;color:#4a4a4a;transform:scaleX(1.020)">13</div>
<div class="t" style="left:3.12px;top:455.93px;font-size:12.17px;line-height:12.17px;color:#4a4a4a;transform:scaleX(1.020)">14</div>
<div class="t" style="left:3.18px;top:473.59px;font-size:12.17px;line-height:12.17px;color:#4a4a4a;transform:scaleX(1.020)">15</div>
<div class="t" style="left:3.18px;top:491.26px;font-size:12.17px;line-height:12.17px;color:#4a4a4a;transform:scaleX(1.020)">16</div>
<div class="t" style="left:3.25px;top:508.93px;font-size:12.17px;line-height:12.17px;color:#4a4a4a;transform:scaleX(1.020)">17</div>
<div class="t" style="left:3.18px;top:526.60px;font-size:12.17px;line-height:12.17px;color:#4a4a4a;transform:scaleX(1.020)">18</div>
<div class="t" style="left:3.25px;top:544.27px;font-size:12.17px;line-height:12.17px;color:#4a4a4a;transform:scaleX(1.020)">19</div>
<div class="t" style="left:3.31px;top:561.93px;font-size:12.17px;line-height:12.17px;color:#4a4a4a;transform:scaleX(1.020)">20</div>
<div class="t" style="left:3.37px;top:579.60px;font-size:12.17px;line-height:12.17px;color:#4a4a4a;transform:scaleX(1.020)">21</div>
<div class="t" style="left:3.37px;top:597.29px;font-size:12.17px;line-height:12.17px;color:#4a4a4a;transform:scaleX(1.020)">22</div>
<div class="t" style="left:3.31px;top:614.95px;font-size:12.17px;line-height:12.17px;color:#4a4a4a;transform:scaleX(1.020)">23</div>
<div class="t" style="left:3.25px;top:632.62px;font-size:12.17px;line-height:12.17px;color:#4a4a4a;transform:scaleX(1.020)">24</div>
<div class="t" style="left:3.31px;top:650.29px;font-size:12.17px;line-height:12.17px;color:#4a4a4a;transform:scaleX(1.020)">25</div>
<div class="t" style="left:196.36px;top:261.40px;font-size:12.32px;line-height:12.32px;color:#111111;transform:scaleX(0.956)">Land</div>
<div class="t" style="left:101.13px;top:279.07px;font-size:12.32px;line-height:12.32px;color:#111111;transform:scaleX(0.983)">Produkt</div>
<div class="t" style="left:196.61px;top:279.06px;font-size:12.14px;line-height:12.14px;color:#111111;font-weight:bold;transform:scaleX(0.951)">Deutschland</div>
<div class="t" style="left:273.01px;top:279.06px;font-size:12.14px;line-height:12.14px;color:#111111;font-weight:bold;transform:scaleX(0.948)">Frankreich</div>
<div class="t" style="left:349.25px;top:279.06px;font-size:12.14px;line-height:12.14px;color:#111111;font-weight:bold;transform:scaleX(1.023)">Italien</div>
<div class="t" style="left:101.88px;top:296.73px;font-size:12.14px;line-height:12.14px;color:#111111;font-weight:bold;transform:scaleX(0.913)">Schuhe Birte</div>
<div class="t" style="left:101.88px;top:314.40px;font-size:12.14px;line-height:12.14px;color:#111111;font-weight:bold;transform:scaleX(0.890)">Schuhe Elsa</div>
<div class="t" style="left:101.88px;top:332.07px;font-size:12.14px;line-height:12.14px;color:#111111;font-weight:bold;transform:scaleX(0.888)">Schuhe Sunny</div>
<div class="t" style="left:230.85px;top:296.74px;font-size:12.32px;line-height:12.32px;color:#111111;transform:scaleX(0.982)">120,99</div>
<div class="t" style="left:306.73px;top:296.74px;font-size:12.32px;line-height:12.32px;color:#111111;transform:scaleX(1.004)">139,99</div>
<div class="t" style="left:400.73px;top:296.74px;font-size:12.32px;line-height:12.32px;color:#111111;transform:scaleX(1.009)">115</div>
<div class="t" style="left:231.06px;top:314.41px;font-size:12.32px;line-height:12.32px;color:#111111;transform:scaleX(0.971)">190,99</div>
<div class="t" style="left:307.55px;top:314.41px;font-size:12.32px;line-height:12.32px;color:#111111;transform:scaleX(0.980)">220,99</div>
<div class="t" style="left:400.97px;top:314.41px;font-size:12.32px;line-height:12.32px;color:#111111;transform:scaleX(0.957)">181</div>
<div class="t" style="left:237.51px;top:332.08px;font-size:12.32px;line-height:12.32px;color:#111111;transform:scaleX(0.984)">89,99</div>
<div class="t" style="left:307.86px;top:332.08px;font-size:12.32px;line-height:12.32px;color:#111111;transform:scaleX(0.971)">103,99</div>
<div class="t" style="left:407.53px;top:332.08px;font-size:12.32px;line-height:12.32px;color:#111111;transform:scaleX(0.948)">85</div>
</body></html>
